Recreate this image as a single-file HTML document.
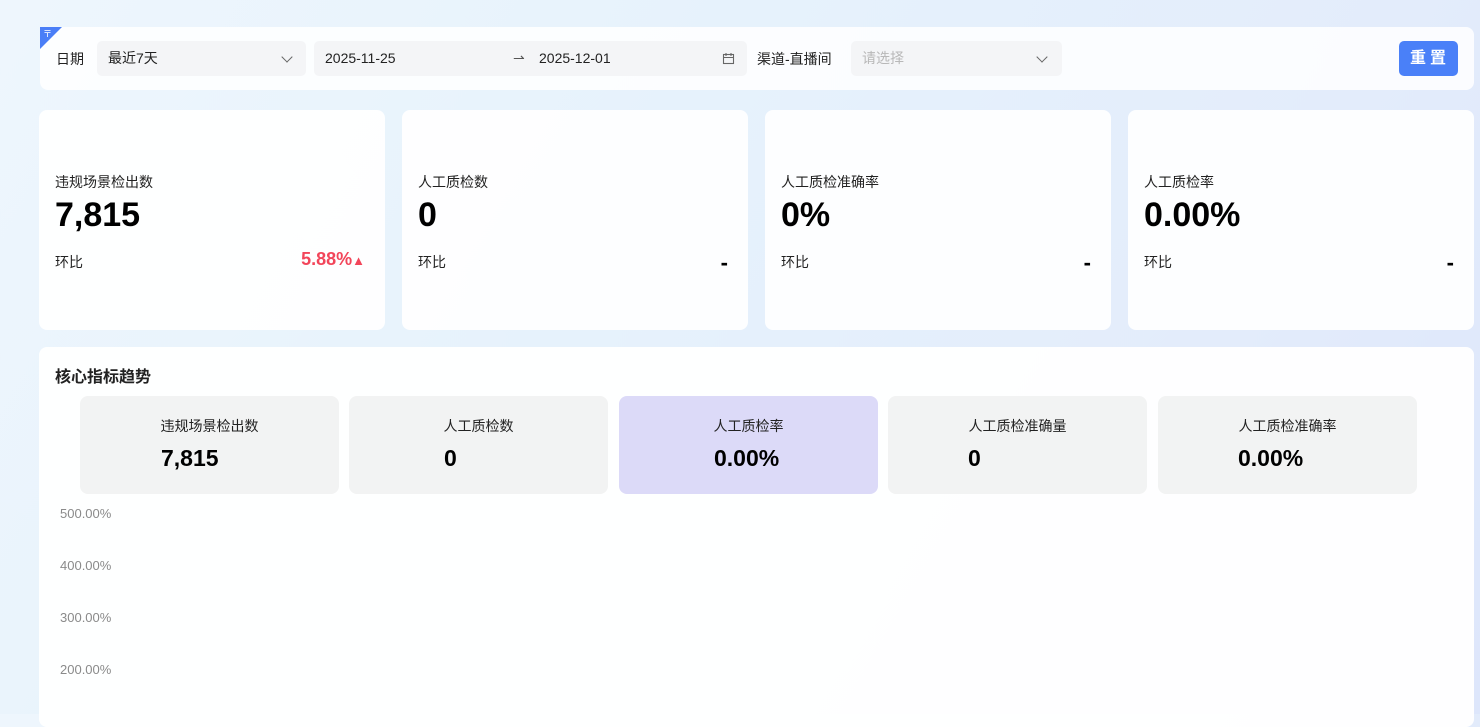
<!DOCTYPE html>
<html><head><meta charset="utf-8"><style>
*{box-sizing:border-box;margin:0;padding:0}
body{width:1480px;height:714px;overflow:hidden;font-family:"Liberation Sans","Noto Sans CJK SC",sans-serif;background:linear-gradient(120deg,#eef6fd 0%,#e6f2fc 40%,#e3ecfb 75%,#dde6fb 100%);position:relative;color:#222}
.bar{position:absolute;left:40px;top:27px;width:1434px;height:63px;background:rgba(255,255,255,.85);border-radius:8px}
.corner{position:absolute;left:40px;top:27px;width:0;height:0;border-top:22px solid #4a7ef7;border-right:22px solid transparent}
.corner span{position:absolute;left:3px;top:-22px;color:#fff;font-size:9px}
.lbl{position:absolute;top:49px;font-size:14px;color:#222}
.sel{position:absolute;top:41px;height:35px;background:#f4f5f7;border-radius:5px;font-size:14px;line-height:35px;padding-left:11px;color:#222}
.chev{position:absolute;top:12px;width:8px;height:8px;border-right:1.3px solid #666;border-bottom:1.3px solid #666;transform:rotate(45deg)}
.btn{position:absolute;left:1399px;top:41px;width:59px;height:35px;background:#4a80f8;border-radius:5px;color:#fff;font-size:16px;font-weight:bold;text-align:center;line-height:35px;letter-spacing:4px;padding-left:3px}
.card{position:absolute;top:110px;width:346px;height:220px;background:rgba(255,255,255,.92);border-radius:8px}
.card .t{position:absolute;left:16px;top:62px;font-size:14px;color:#222}
.card .v{position:absolute;left:16px;top:86px;font-size:34px;font-weight:bold;color:#000}
.card .h{position:absolute;left:16px;top:142px;font-size:14px;color:#222}
.card .r{position:absolute;right:20px;top:139px;font-size:18px;font-weight:bold;color:#000}
.card .d{font-size:22px;top:140px}
.panel{position:absolute;left:39px;top:347px;width:1435px;height:380px;background:rgba(255,255,255,.95);border-radius:8px}
.ptitle{position:absolute;left:16px;top:16px;font-size:16px;font-weight:bold;color:#222}
.tile{position:absolute;top:49px;width:259px;height:98px;background:#f2f3f3;border-radius:8px;text-align:center}
.tile .a{position:absolute;top:20px;left:0;right:0;font-size:14px;color:#222}
.tile .b{position:absolute;top:49px;font-size:23px;font-weight:bold;color:#000}
.y{position:absolute;left:21px;font-size:13px;color:#8a8a8a}
</style></head><body>
<div class="bar"></div>
<div class="corner"><span>〒</span></div>
<div class="lbl" style="left:56px">日期</div>
<div class="sel" style="left:97px;width:209px">最近7天<div class="chev" style="left:186px"></div></div>
<div class="sel" style="left:314px;width:433px">2025-11-25<span style="position:absolute;left:199px;color:#555">⇀</span><span style="position:absolute;left:225px">2025-12-01</span>
<svg style="position:absolute;left:408px;top:11px" width="13" height="13" viewBox="0 0 13 13"><rect x="1.5" y="2.5" width="10" height="9" fill="none" stroke="#666" stroke-width="1.1"/><path d="M1.5 5.5h10M4 1v3M9 1v3" stroke="#666" stroke-width="1.1"/></svg></div>
<div class="lbl" style="left:757px">渠道-直播间</div>
<div class="sel" style="left:851px;width:211px;color:#b8b8b8">请选择<div class="chev" style="left:187px"></div></div>
<div class="btn">重置</div>

<div class="card" style="left:39px"><div class="t">违规场景检出数</div><div class="v">7,815</div><div class="h">环比</div><div class="r" style="color:#f2455a">5.88%<span style="font-size:13px">▲</span></div></div>
<div class="card" style="left:402px"><div class="t">人工质检数</div><div class="v">0</div><div class="h">环比</div><div class="r d">-</div></div>
<div class="card" style="left:765px"><div class="t">人工质检准确率</div><div class="v">0%</div><div class="h">环比</div><div class="r d">-</div></div>
<div class="card" style="left:1128px"><div class="t">人工质检率</div><div class="v">0.00%</div><div class="h">环比</div><div class="r d">-</div></div>

<div class="panel">
<div class="ptitle">核心指标趋势</div>
<div class="tile" style="left:41px"><div class="a">违规场景检出数</div><div class="b" style="left:81px">7,815</div></div>
<div class="tile" style="left:310px"><div class="a">人工质检数</div><div class="b" style="left:95px">0</div></div>
<div class="tile" style="left:580px;background:#dcdaf8"><div class="a">人工质检率</div><div class="b" style="left:95px">0.00%</div></div>
<div class="tile" style="left:849px"><div class="a">人工质检准确量</div><div class="b" style="left:80px">0</div></div>
<div class="tile" style="left:1119px"><div class="a">人工质检准确率</div><div class="b" style="left:80px">0.00%</div></div>
<div class="y" style="top:159px">500.00%</div>
<div class="y" style="top:211px">400.00%</div>
<div class="y" style="top:263px">300.00%</div>
<div class="y" style="top:315px">200.00%</div>
</div>
</body></html>
